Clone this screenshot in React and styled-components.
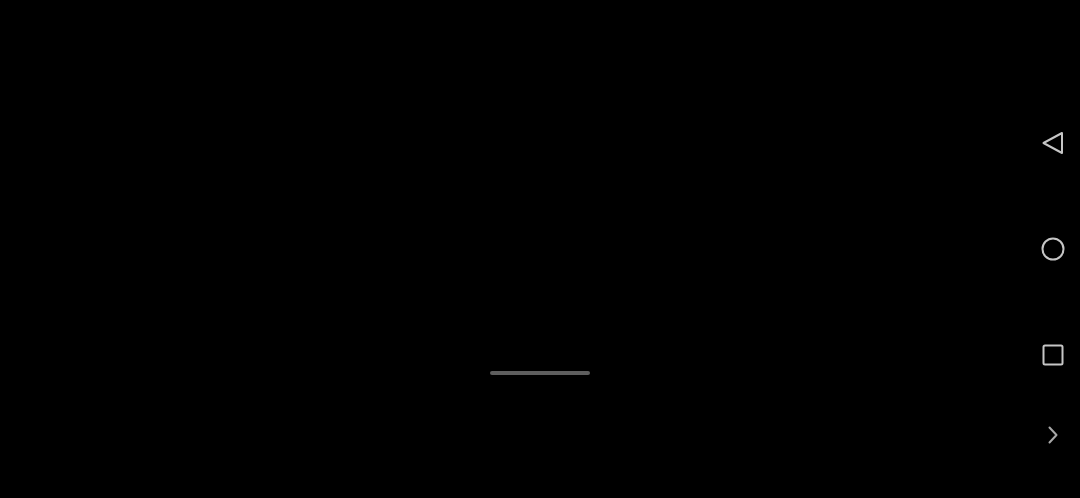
import styled, { createGlobalStyle } from 'styled-components';

const GlobalStyle = createGlobalStyle`
  html, body {
    margin: 0;
    padding: 0;
    background: #000;
    font-family: "Roboto", "Liberation Sans", sans-serif;
  }
`;

const Screen = styled.div`
  display: grid;
  grid-template-columns: 54px 1fr 54px;
  width: 1080px;
  height: 498px;
  background: #000;
  overflow: hidden;
`;

const Stage = styled.div`
  grid-column: 2;
  display: flex;
  flex-direction: column;
  justify-content: flex-end;
  align-items: center;
  padding-bottom: 123px;
`;

const Handle = styled.div`
  width: 100px;
  height: 4px;
  border-radius: 2px;
  background: #5e5e5e;
`;

const NavBar = styled.nav`
  grid-column: 3;
  display: flex;
  flex-direction: column;
  align-items: center;
  padding-top: 90px;
`;

const NavButton = styled.button`
  display: flex;
  align-items: center;
  justify-content: center;
  width: 54px;
  height: ${(p) => (p.$small ? '54px' : '106px')};
  padding: 0;
  border: 0;
  background: transparent;
  color: ${(p) => (p.$small ? '#a8a8a8' : '#c6c6c6')};
  cursor: pointer;
`;

const Icon = styled.svg`
  display: block;
  fill: none;
  stroke: currentColor;
  stroke-width: 2;
  stroke-linejoin: round;
  stroke-linecap: round;
`;

const App = () => {
  return (
    <>
      <GlobalStyle />
      <Screen>
        <Stage>
          <Handle />
        </Stage>
        <NavBar>
          <NavButton aria-label="back">
            <Icon width="24" height="24" viewBox="0 0 24 24">
              <path d="M2.5 12 L21 2 L21 22 Z" />
            </Icon>
          </NavButton>
          <NavButton aria-label="home">
            <Icon width="24" height="24" viewBox="0 0 24 24">
              <circle cx="12" cy="12" r="10.5" />
            </Icon>
          </NavButton>
          <NavButton aria-label="recents">
            <Icon width="24" height="24" viewBox="0 0 24 24">
              <rect x="2.5" y="2.5" width="19" height="19" rx="1.5" />
            </Icon>
          </NavButton>
          <NavButton $small aria-label="more">
            <Icon width="24" height="24" viewBox="0 0 24 24">
              <path d="M8.5 4.5 L15.5 12 L8.5 19.5" />
            </Icon>
          </NavButton>
        </NavBar>
      </Screen>
    </>
  );
};

export default App;
